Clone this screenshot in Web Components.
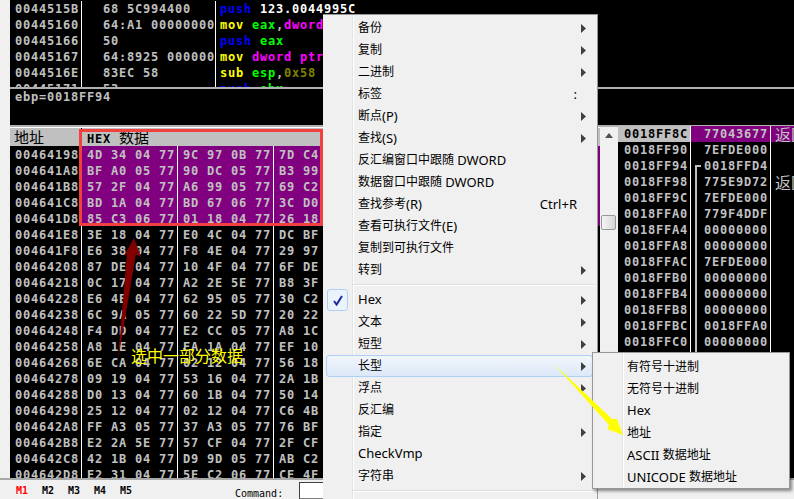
<!DOCTYPE html>
<html lang="zh-CN">
<head>
<meta charset="UTF-8">
<title>OllyDbg</title>
<style>
  html, body { margin: 0; padding: 0; background: #f0f0f0; }
</style>
</head>
<body>
<od-window></od-window>

<script>
const MONO = `"DejaVu Sans Mono", "Noto Sans CJK SC", monospace`;
const UI = `"Noto Sans", "Noto Sans CJK SC", sans-serif`;
// every cell of the debugger panes is 8px wide, like the fixed font of the original
const CELL_FONT = `font: bold 12px/16px ${MONO}; letter-spacing: .78px;`;

class OdCodePane extends HTMLElement {
  connectedCallback() {
    const rows = [
      ['0044515B', '68 5C994400', '<b class="blue">push</b> <b class="white">123.0044995C</b>'],
      ['00445160', '64:A1 00000000', '<b class="yellow">mov</b> <b class="green">eax</b>,<b class="pink">dword ptr</b>'],
      ['00445166', '50', '<b class="blue">push</b> <b class="green">eax</b>'],
      ['00445167', '64:8925 00000000', '<b class="yellow">mov</b> <b class="pink">dword ptr</b>'],
      ['0044516E', '83EC 58', '<b class="yellow">sub</b> <b class="green">esp</b>,<b class="olive">0x58</b>'],
      ['00445171', '53', '<b class="blue">push</b> <b class="green">ebx</b>'],
    ];
    this.attachShadow({ mode: 'open' }).innerHTML = `
      <style>
        :host { display: block; height: 87px; margin-left: 10px; background: #000; overflow: hidden;
                ${CELL_FONT} color: #c0c0c0; }
        .row { display: grid; grid-template-columns: 71px 134px 1fr; height: 16px; white-space: pre; }
        .row:first-of-type { margin-top: 1px; }
        .row > div { overflow: hidden; height: 16px; padding-left: 5px; box-sizing: border-box; }
        .row > div + div { border-left: 1px solid #fff; }
        .row > div:nth-child(2) { padding-left: 21px; }
        .row > div:nth-child(3) { padding-left: 4px; }
        .blue { color: #0000ff; } .yellow { color: #ffff00; } .green { color: #00ff00; }
        .pink { color: #ff00ff; } .olive { color: #808000; } .white { color: #fff; }
        b { font-weight: bold; }
      </style>
      ${rows.map(r => `<div class="row"><div>${r[0]}</div><div>${r[1]}</div><div>${r[2]}</div></div>`).join('')}`;
  }
}

class OdInfoPane extends HTMLElement {
  connectedCallback() {
    this.attachShadow({ mode: 'open' }).innerHTML = `
      <style>
        :host { display: block; height: 36px; margin-left: 10px; background: #000;
                ${CELL_FONT} color: #c0c0c0; padding-left: 5px; box-sizing: border-box; }
      </style>
      ebp=0018FF94`;
  }
}

class OdDumpPane extends HTMLElement {
  connectedCallback() {
    const data = `00464198 4D 34 04 77|9C 97 0B 77|7D C4
004641A8 BF A0 05 77|90 DC 05 77|B3 99
004641B8 57 2F 04 77|A6 99 05 77|69 C2
004641C8 BD 1A 04 77|BD 67 06 77|3C D0
004641D8 85 C3 06 77|01 18 04 77|26 18
004641E8 3E 18 04 77|E0 4C 04 77|DC BF
004641F8 E6 38 04 77|F8 4E 04 77|29 97
00464208 87 DE 04 77|10 4F 04 77|6F DE
00464218 0C 17 04 77|A2 2E 5E 77|B8 3F
00464228 E6 4E 04 77|62 95 05 77|30 C2
00464238 6C 9A 05 77|60 22 5D 77|20 22
00464248 F4 DD 04 77|E2 CC 05 77|A8 1C
00464258 A8 1E 04 77|EA 1A 04 77|EF 10
00464268 6E CA 04 77|02 12 04 77|56 18
00464278 09 19 04 77|53 16 04 77|2A 1B
00464288 D0 13 04 77|60 1B 04 77|50 14
00464298 25 12 04 77|02 12 04 77|C6 4B
004642A8 FF A3 05 77|37 A3 05 77|76 BF
004642B8 E2 2A 5E 77|57 CF 04 77|2F CF
004642C8 42 1B 04 77|D9 9D 05 77|AB C2
004642D8 E2 31 04 77|5E C2 06 77|CE 4F`.split('\n');
    const rows = data.map((line, i) => {
      const addr = line.slice(0, 8);
      const cols = line.slice(9).split('|');
      return `<div class="row ${i < 5 ? 'sel' : ''}"><div>${addr}</div>${cols.map(c => `<div>${c}</div>`).join('')}</div>`;
    }).join('');
    this.attachShadow({ mode: 'open' }).innerHTML = `
      <style>
        :host { display: block; width: 590px; margin-left: 10px; background: #000; overflow: hidden;
                ${CELL_FONT} color: #c0c0c0; }
        .head, .row { display: grid; grid-template-columns: 71px 96px 96px 1fr; white-space: pre; }
        .row { height: 16px; line-height: 18px; }
        .row > div { padding-left: 5px; box-sizing: border-box; height: 16px; }
        .row > div + div { border-left: 1px solid #fff; }
        .sel > div + div { background: #800080; }
        .head { height: 19px; background: #c0c0c0; color: #000; border-top: 1px solid #fff; box-sizing: border-box; letter-spacing: 0; }
        .head > div { padding-left: 4px; font: 15px/17px "Noto Sans CJK SC", sans-serif; }
        .head .data { grid-column: 2 / 5; border-left: 1px solid #000; padding-left: 5px; }
        .head b { font: bold 12px/16px ${MONO}; letter-spacing: .78px; margin-right: 8px; }
      </style>
      <div class="head"><div>地址</div><div class="data"><b>HEX</b>数据</div></div>
      ${rows}`;
  }
}

class OdScrollbar extends HTMLElement {
  connectedCallback() {
    this.attachShadow({ mode: 'open' }).innerHTML = `
      <style>
        :host { display: block; width: 17px; background: #f0f0f0; flex: none; position: relative; }
        .up { display: flex; align-items: center; justify-content: center; height: 17px; }
        .up svg { display: block; }
        .thumb { margin: 71px 1px 0; height: 15px; box-sizing: border-box; border: 1px solid #979797; border-radius: 2px;
                 background: linear-gradient(to right, #f6f6f6, #d4d4d4); }
      </style>
      <div class="up"><svg width="8" height="5"><polygon points="4,0 8,5 0,5" fill="#505050"/></svg></div>
      <div class="thumb"></div>`;
  }
}

class OdStackPane extends HTMLElement {
  connectedCallback() {
    const rows = [
      ['0018FF8C', '77043677', '返回到'],
      ['0018FF90', '7EFDE000', ''],
      ['0018FF94', '0018FFD4', '', 'top'],
      ['0018FF98', '775E9D72', '返回到', 'mid'],
      ['0018FF9C', '7EFDE000', '', 'mid'],
      ['0018FFA0', '779F4DDF', '', 'mid'],
      ['0018FFA4', '00000000', '', 'mid'],
      ['0018FFA8', '00000000', '', 'mid'],
      ['0018FFAC', '7EFDE000', '', 'mid'],
      ['0018FFB0', '00000000', '', 'mid'],
      ['0018FFB4', '00000000', '', 'mid'],
      ['0018FFB8', '00000000', '', 'mid'],
      ['0018FFBC', '0018FFA0', '', 'mid'],
      ['0018FFC0', '00000000', '', 'mid'],
      ['', '', '', 'mid'],
    ];
    this.attachShadow({ mode: 'open' }).innerHTML = `
      <style>
        :host { display: block; flex: 1; background: #000; overflow: hidden; margin: -1px 0 0 1px;
                ${CELL_FONT} color: #c0c0c0; }
        .row { display: grid; grid-template-columns: 72px 80px 1fr; height: 16px; white-space: pre; }
        .row > div { box-sizing: border-box; height: 16px; overflow: hidden; }
        .row > div:first-child { padding-left: 6px; }
        .val { display: flex; border-left: 1px solid #fff; }
        .cmt { border-left: 1px solid #fff; padding-left: 4px; font: 16px/16px "Noto Sans CJK SC", sans-serif; letter-spacing: 0; }
        .br { width: 9px; flex: none; box-sizing: border-box; margin-left: 4px; }
        .mid { border-left: 2px solid #c0c0c0; }
        .top { border-left: 2px solid #c0c0c0; border-top: 2px solid #c0c0c0; margin-top: 7px; height: 9px; width: 6px; margin-right: 3px; }
        .first > div:first-child { background: #c0c0c0; color: #000; }
        .first > div + div { background: #800080; }
      </style>
      ${rows.map((r, i) => `<div class="row ${i === 0 ? 'first' : ''}"><div>${r[0]}</div><div class="val"><span class="br ${r[3] || ''}"></span><span>${r[1]}</span></div><div class="cmt">${r[2]}</div></div>`).join('')}`;
  }
}

class OdStatusBar extends HTMLElement {
  connectedCallback() {
    this.attachShadow({ mode: 'open' }).innerHTML = `
      <style>
        :host { display: flex; height: 21px; box-sizing: border-box; background: #f0f0f0; border-top: 2px solid #a8a8a8;
                padding-left: 16px; font: bold 10px/14px ${MONO}; color: #000; }
        .m { width: 26px; padding-top: 4px; }
        .m.on { color: #ff0000; }
        .cmd { margin-left: 89px; padding-top: 7px; font-weight: normal; }
        .box { margin-left: 16px; margin-top: 2px; width: 32px; box-sizing: border-box; background: #fff;
               border: 1px solid #808080; border-top-color: #404040; border-left-color: #404040; }
      </style>
      <span class="m on">M1</span><span class="m">M2</span><span class="m">M3</span><span class="m">M4</span><span class="m">M5</span>
      <span class="cmd">Command:</span>
      <span class="box"></span>`;
  }
}

class OdMenuItem extends HTMLElement {
  connectedCallback() {
    const hint = this.getAttribute('hint');
    const root = this.attachShadow({ mode: 'open' });
    root.innerHTML = `
      <style>
        :host { display: flex; align-items: center; position: relative; height: 22px; box-sizing: border-box;
                margin: 0 2px 0 3px; padding-left: var(--text-left, 31px); padding-right: 8px;
                border: 1px solid transparent; border-radius: 3px; color: #000; white-space: pre; }
        :host([active]) { border-color: #aecff7; background: linear-gradient(#f2f6fc, #dce8f8); margin-right: 4px; padding-right: 6px; }
        .grow { flex: 1; }
        .hint { margin-right: 9px; font-size: 13px; }
        .arrow { display: block; margin-left: 6px; }
        .check { position: absolute; left: 0; top: -1px; width: 21px; height: 22px; box-sizing: border-box; display: flex; align-items: center; justify-content: center;
                 border: 1px solid #aecff7; border-radius: 3px; background: #eaf2fc; }
      </style>
      ${this.hasAttribute('checked') ? '<span class="check"><svg width="10" height="11" viewBox="0 0 10 11"><path d="M1 6 L3.6 9.6 L9 1" fill="none" stroke="#1b2d9e" stroke-width="2"/></svg></span>' : ''}
      <slot></slot><span class="grow"></span>
      ${hint ? `<span class="hint">${hint}</span>` : ''}
      ${this.hasAttribute('more') ? '<svg class="arrow" width="5" height="9"><polygon points="0,0 5,4.5 0,9" fill="#404040"/></svg>' : ''}`;
  }
}

class OdContextMenu extends HTMLElement {
  connectedCallback() {
    this.attachShadow({ mode: 'open' }).innerHTML = `
      <style>
        :host { display: block; position: absolute; left: 323px; top: 14px; width: 275px; height: 500px; box-sizing: border-box;
                padding-top: 2px; border: 1px solid #979797; border-left: 0; background: #f0f0f0;
                font: 12px/16px ${UI}; }
        .gutter { position: absolute; left: 29px; top: 0; bottom: 0; width: 2px; background: linear-gradient(to right, #e2e3e3 50%, #fff 50%); }
        .sep { height: 8px; position: relative; }
        .sep::after { content: ""; position: absolute; left: 30px; right: 2px; top: 3px; height: 1px; background: #dcdcdc; border-bottom: 1px solid #fff; }
      </style>
      <div class="gutter"></div>
      <slot name="a"></slot><div class="sep"></div><slot name="b"></slot><div class="sep"></div>`;
  }
}

class OdSubMenu extends HTMLElement {
  connectedCallback() {
    this.attachShadow({ mode: 'open' }).innerHTML = `
      <style>
        :host { display: block; position: absolute; left: 592px; top: 352px; width: 198px; height: 137px; box-sizing: border-box;
                padding-top: 3px; border: 1px solid #979797; background: #f0f0f0; box-shadow: 2px 2px 3px rgba(0,0,0,.45);
                font: 12px/16px ${UI}; --text-left: 30px; }
        .gutter { position: absolute; left: 29px; top: 0; bottom: 0; width: 2px; background: linear-gradient(to right, #e2e3e3 50%, #fff 50%); }
      </style>
      <div class="gutter"></div>
      <slot></slot>`;
  }
}

class OdAnnotations extends HTMLElement {
  connectedCallback() {
    this.attachShadow({ mode: 'open' }).innerHTML = `
      <style>
        :host { display: block; position: absolute; inset: 0; pointer-events: none; }
        .box { position: absolute; left: 79px; top: 129px; width: 244px; height: 97px; box-sizing: border-box; border: 3px solid #f04040; }
        svg { position: absolute; left: 0; top: 0; }
        .note { position: absolute; left: 131px; top: 345px; font: 16px/20px "Noto Sans CJK SC", sans-serif; color: #ffff00; white-space: pre; }
      </style>
      <div class="box"></div>
      <svg width="794" height="499">
        <polygon points="134,238 141,257 136,254 118,360 127,254 124,256" fill="#800000"/>
        <polygon points="554,364 612,419 617,419 623,435 607,429 609,425" fill="#ffff00"/>
      </svg>
      <span class="note">选中一部分数据</span>`;
  }
}

const latin = t => {
  if (/^[\x20-\x7e]+$/.test(t)) return `<span style="font-size:13px;display:block;margin-top:-2px">${t}</span>`;
  return t.replace(/[\x21-\x7e][\x20-\x7e]*/g, m => `<span style="font-size:13px">${m}</span>`);
};

class OdWindow extends HTMLElement {
  connectedCallback() {
    const items = [
      ['备份', 1], ['复制', 1], ['二进制', 1], ['标签', 0, ':'], ['断点(P)', 1], ['查找(S)', 1],
      ['反汇编窗口中跟随 DWORD'], ['数据窗口中跟随 DWORD'], ['查找参考(R)', 0, 'Ctrl+R'],
      ['查看可执行文件(E)'], ['复制到可执行文件'], ['转到', 1],
    ].map(i => `<od-menu-item slot="a" ${i[1] ? 'more' : ''} ${i[2] ? `hint="${i[2]}"` : ''}>${latin(i[0])}</od-menu-item>`).join('');
    const items2 = [
      ['Hex', 1, 'checked'], ['文本', 1], ['短型', 1], ['长型', 1, 'active'], ['浮点', 1], ['反汇编'],
      ['指定', 1], ['CheckVmp'], ['字符串', 1],
    ].map(i => `<od-menu-item slot="b" ${i[1] ? 'more' : ''} ${i[2] || ''}>${latin(i[0])}</od-menu-item>`).join('');
    const sub = ['有符号十进制', '无符号十进制', 'Hex', '地址', 'ASCII 数据地址', 'UNICODE 数据地址']
      .map(t => `<od-menu-item>${latin(t)}</od-menu-item>`).join('');

    this.attachShadow({ mode: 'open' }).innerHTML = `
      <style>
        :host { display: flex; flex-direction: column; position: relative; width: 794px; height: 499px; overflow: hidden; background: #f0f0f0; }
        .line { height: 2px; margin-left: 10px; background: #b0b0b0; flex: none; }
        .main { display: flex; flex: 1; min-height: 0; }
        od-status-bar { flex: none; position: relative; }
      </style>
      <od-code-pane></od-code-pane>
      <div class="line"></div>
      <od-info-pane></od-info-pane>
      <div class="line"></div>
      <div class="main">
        <od-dump-pane></od-dump-pane>
        <od-scrollbar></od-scrollbar>
        <od-stack-pane></od-stack-pane>
      </div>
      <od-status-bar></od-status-bar>
      <od-context-menu>${items}${items2}</od-context-menu>
      <od-sub-menu>${sub}</od-sub-menu>
      <od-annotations></od-annotations>`;
  }
}

customElements.define('od-code-pane', OdCodePane);
customElements.define('od-info-pane', OdInfoPane);
customElements.define('od-dump-pane', OdDumpPane);
customElements.define('od-scrollbar', OdScrollbar);
customElements.define('od-stack-pane', OdStackPane);
customElements.define('od-status-bar', OdStatusBar);
customElements.define('od-menu-item', OdMenuItem);
customElements.define('od-context-menu', OdContextMenu);
customElements.define('od-sub-menu', OdSubMenu);
customElements.define('od-annotations', OdAnnotations);
customElements.define('od-window', OdWindow);
</script>
</body>
</html>
